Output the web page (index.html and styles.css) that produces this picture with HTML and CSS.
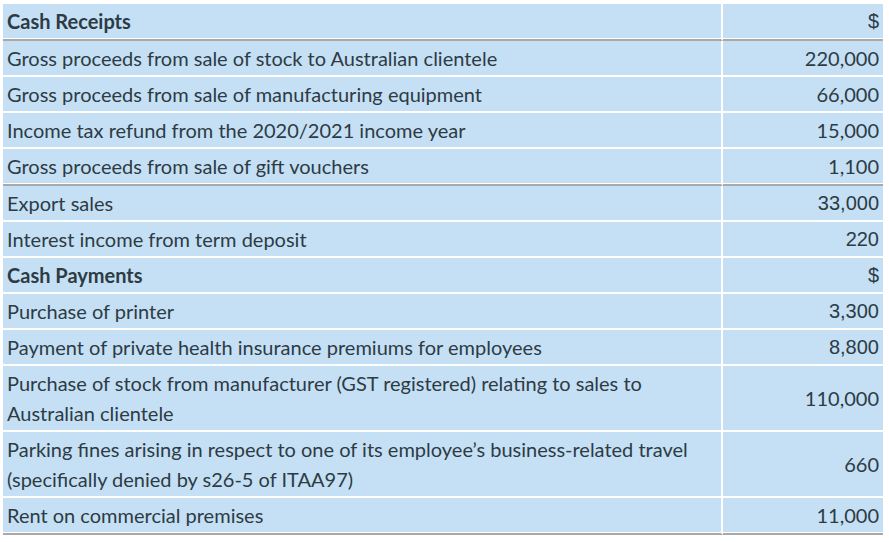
FILE: index.html
```html
<!DOCTYPE html>
<html lang="en">
<head>
<meta charset="utf-8">
<title>Cash Receipts and Payments</title>
<link rel="stylesheet" href="styles.css">
</head>
<body>
<div class="wrap">
<table class="cash">
  <tbody>
    <tr class="sep">
      <td class="label head">Cash Receipts</td>
      <td class="val arial">$</td>
    </tr>
    <tr>
      <td class="label">Gross proceeds from sale of stock to Australian clientele</td>
      <td class="val">220,000</td>
    </tr>
    <tr>
      <td class="label">Gross proceeds from sale of manufacturing equipment</td>
      <td class="val">66,000</td>
    </tr>
    <tr>
      <td class="label">Income tax refund from the 2020/2021 income year</td>
      <td class="val">15,000</td>
    </tr>
    <tr class="sep">
      <td class="label">Gross proceeds from sale of gift vouchers</td>
      <td class="val">1,100</td>
    </tr>
    <tr>
      <td class="label">Export sales</td>
      <td class="val arial">33,000</td>
    </tr>
    <tr>
      <td class="label">Interest income from term deposit</td>
      <td class="val arial">220</td>
    </tr>
    <tr>
      <td class="label head">Cash Payments</td>
      <td class="val arial">$</td>
    </tr>
    <tr>
      <td class="label">Purchase of printer</td>
      <td class="val arial">3,300</td>
    </tr>
    <tr>
      <td class="label">Payment of private health insurance premiums for employees</td>
      <td class="val arial">8,800</td>
    </tr>
    <tr>
      <td class="label">Purchase of stock from manufacturer (GST registered) relating to sales to<br>Australian clientele</td>
      <td class="val">110,000</td>
    </tr>
    <tr>
      <td class="label">Parking fines arising in respect to one of its employee’s business-related travel<br>(specifically denied by s26-5 of ITAA97)</td>
      <td class="val">660</td>
    </tr>
    <tr class="sep">
      <td class="label">Rent on commercial premises</td>
      <td class="val">11,000</td>
    </tr>
  </tbody>
</table>
</div>
</body>
</html>
```

FILE: styles.css
```css
html, body {
  margin: 0;
  padding: 0;
  background: #ffffff;
}

.wrap {
  padding: 4px 0 0 3px;
}

.cash {
  border-collapse: separate;
  border-spacing: 0;
  width: 880px;
  font-family: Lato, "Open Sans", sans-serif;
  font-size: 20px;
  color: #2d3b45;
}

.cash td {
  background: #c5e0f4;
  line-height: 30px;
  padding: 2px 4px;
  border-bottom: 2px solid #ffffff;
  vertical-align: middle;
}

.cash tr.sep td {
  padding-bottom: 3px;
  border-bottom-color: #a9a9a9;
  box-shadow: inset 0 -1px 0 #ffffff;
}

.cash td.label {
  border-right: 2px solid #ffffff;
  text-align: left;
}

.cash td.val {
  width: 152px;
  text-align: right;
}

.cash td.head {
  font-weight: bold;
}

.cash td.arial {
  font-family: "Liberation Sans", Arial, sans-serif;
}
```
